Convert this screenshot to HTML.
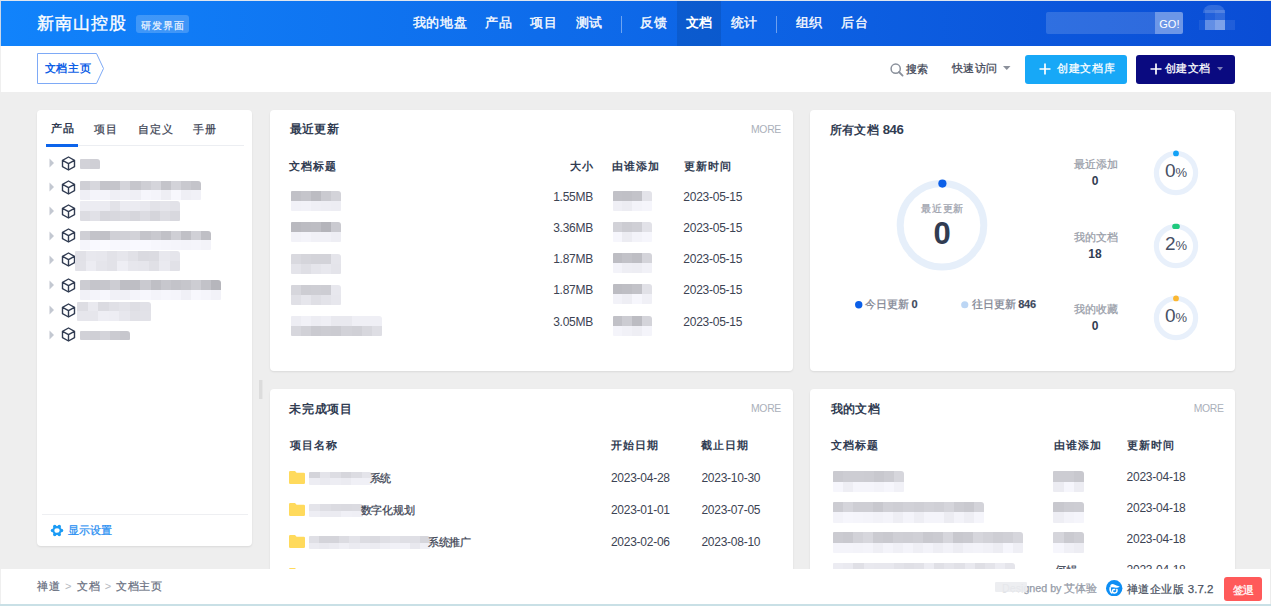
<!DOCTYPE html>
<html><head><meta charset="utf-8">
<style>
*{box-sizing:border-box}
html,body{margin:0;padding:0}
body{width:1271px;height:606px;overflow:hidden;position:relative;background:#eeeeee;font-family:"Liberation Sans",sans-serif;color:#3c4353;font-size:12px}
.a{position:absolute;white-space:nowrap}
#hdr,#sub,#ftr{position:absolute;left:0;width:1271px}
#hdr{top:0;height:46px;background:linear-gradient(90deg,#1183fb 0%,#0a4dd5 100%);border-top:1px solid #dfe6ef;border-left:1px solid #c9d7ea}
#sub{top:46px;height:45.5px;background:#fff;border-left:1px solid #efefef}
#hdr .a,#sub .a{}
.card{position:absolute;background:#fff;border-radius:4px;box-shadow:0 1px 2px rgba(0,0,0,.09)}
#ftr{top:569px;height:35px;background:#fff;border-left:1px solid #efefef;border-right:1px solid #ececec}
#strip{position:absolute;left:0;top:604px;width:1271px;height:2px;background:#c9e0e6}
</style></head><body>

<div id="hdr"></div>
<div class="a" style="left:37px;top:13.5px;font-size:17px;line-height:20px;color:#fff;letter-spacing:1.1px;-webkit-text-stroke:0.35px #fff;">新南山控股</div>
<div class="a" style="left:136px;top:15px;width:52.5px;height:18px;border-radius:3px;background:rgba(255,255,255,.2)"></div>
<div class="a" style="left:141px;top:18.5px;font-size:10px;line-height:13px;color:rgba(255,255,255,.85);letter-spacing:1px;-webkit-text-stroke:0.25px rgba(255,255,255,.85);">研发界面</div>
<div class="a" style="left:676.7px;top:1px;width:44px;height:44.5px;background:rgba(0,0,0,.1);"></div>
<div class="a" style="left:412.5px;top:14.8px;font-size:13px;line-height:16px;color:rgba(255,255,255,.93);font-weight:bold;letter-spacing:0.9px;">我的地盘</div>
<div class="a" style="left:485.1px;top:14.8px;font-size:13px;line-height:16px;color:rgba(255,255,255,.93);font-weight:bold;letter-spacing:0.9px;">产品</div>
<div class="a" style="left:530.1px;top:14.8px;font-size:13px;line-height:16px;color:rgba(255,255,255,.93);font-weight:bold;letter-spacing:0.9px;">项目</div>
<div class="a" style="left:575.5px;top:14.8px;font-size:13px;line-height:16px;color:rgba(255,255,255,.93);font-weight:bold;letter-spacing:0.9px;">测试</div>
<div class="a" style="left:640.3px;top:14.8px;font-size:13px;line-height:16px;color:rgba(255,255,255,.93);font-weight:bold;letter-spacing:0.9px;">反馈</div>
<div class="a" style="left:685.5px;top:14.8px;font-size:13px;line-height:16px;color:#fff;font-weight:bold;letter-spacing:0.9px;">文档</div>
<div class="a" style="left:730.5px;top:14.8px;font-size:13px;line-height:16px;color:rgba(255,255,255,.93);font-weight:bold;letter-spacing:0.9px;">统计</div>
<div class="a" style="left:795.5px;top:14.8px;font-size:13px;line-height:16px;color:rgba(255,255,255,.93);font-weight:bold;letter-spacing:0.9px;">组织</div>
<div class="a" style="left:840.7px;top:14.8px;font-size:13px;line-height:16px;color:rgba(255,255,255,.93);font-weight:bold;letter-spacing:0.9px;">后台</div>
<div class="a" style="left:621px;top:15.5px;width:1px;height:17px;background:rgba(255,255,255,.4);"></div>
<div class="a" style="left:776px;top:15.5px;width:1px;height:17px;background:rgba(255,255,255,.4);"></div>
<div class="a" style="left:1046px;top:12px;width:137px;height:22px;background:rgba(255,255,255,.15);border-radius:2px"></div>
<div class="a" style="left:1155px;top:12px;width:28px;height:22px;background:rgba(255,255,255,.3);border-radius:0 2px 2px 0"></div>
<div class="a" style="left:1159.3px;top:16.5px;font-size:11px;line-height:14px;color:#fff;">GO!</div>
<div class="a" style="left:1199px;top:5px;width:36px;height:25px"><div class="a" style="left:4px;top:0;width:22px;height:8px;border-radius:11px 11px 0 0;background:rgba(255,255,255,.16)"></div><div class="a" style="left:6px;top:5px;width:10px;height:10px;background:rgba(255,255,255,.1)"></div><div class="a" style="left:16px;top:5px;width:10px;height:10px;background:rgba(255,255,255,.16)"></div><div class="a" style="left:0;top:15px;width:6px;height:10px;background:rgba(255,255,255,.07)"></div><div class="a" style="left:6px;top:15px;width:10px;height:10px;background:rgba(255,255,255,.36)"></div><div class="a" style="left:16px;top:15px;width:10px;height:10px;background:rgba(255,255,255,.47)"></div><div class="a" style="left:26px;top:15px;width:10px;height:10px;background:rgba(255,255,255,.09)"></div></div>
<div id="sub"></div>
<svg class="a" style="left:37px;top:53px" width="70" height="31" viewBox="0 0 70 31"><path d="M0.5 0.5 H59.5 L66.5 15.5 L59.5 30.5 H0.5 Z" fill="#fff" stroke="#7eaaf6" stroke-width="1"/></svg>
<div class="a" style="left:44.5px;top:60.8px;font-size:11px;line-height:14px;color:#0f5fe6;font-weight:bold;letter-spacing:0.8px;">文档主页</div>
<svg class="a" style="left:890px;top:63px" width="14" height="14" viewBox="0 0 14 14"><circle cx="5.7" cy="5.7" r="4.6" fill="none" stroke="#8a909b" stroke-width="1.5"/><path d="M9 9 L12.6 12.6" stroke="#8a909b" stroke-width="1.8" stroke-linecap="round"/></svg>
<div class="a" style="left:905.5px;top:61.5px;font-size:11px;line-height:14px;color:#3c4353;letter-spacing:0.5px;-webkit-text-stroke:0.25px #3c4353;">搜索</div>
<div class="a" style="left:951.5px;top:61.3px;font-size:11px;line-height:14px;color:#3c4353;letter-spacing:0.5px;-webkit-text-stroke:0.25px #3c4353;">快速访问</div>
<svg class="a" style="left:1003px;top:66px" width="8" height="5" viewBox="0 0 8 5"><path d="M0 0 H7.5 L3.75 4 Z" fill="#8b909a"/></svg>
<div class="a" style="left:1025.3px;top:55px;width:101.5px;height:29px;background:#17a8f7;border-radius:3px"></div>
<svg class="a" style="left:1039px;top:63px" width="12" height="12" viewBox="0 0 12 12"><path d="M6 0.5 V11.5 M0.5 6 H11.5" stroke="#fff" stroke-width="1.7"/></svg>
<div class="a" style="left:1057px;top:61.3px;font-size:11px;line-height:14px;color:#fff;letter-spacing:0.7px;-webkit-text-stroke:0.25px #fff;">创建文档库</div>
<div class="a" style="left:1136px;top:55px;width:99px;height:29px;background:#0a0a80;border-radius:3px"></div>
<svg class="a" style="left:1150px;top:63px" width="12" height="12" viewBox="0 0 12 12"><path d="M6 0.5 V11.5 M0.5 6 H11.5" stroke="#fff" stroke-width="1.7"/></svg>
<div class="a" style="left:1164.5px;top:61.3px;font-size:11px;line-height:14px;color:#fff;letter-spacing:0.5px;-webkit-text-stroke:0.25px #fff;">创建文档</div>
<svg class="a" style="left:1216.5px;top:67px" width="6" height="4" viewBox="0 0 6 4"><path d="M0 0 H6 L3 3.5 Z" fill="#7f7fb5"/></svg>
<div class="card" style="left:37px;top:110px;width:215px;height:436px"></div>
<div class="a" style="left:50.5px;top:121px;font-size:11px;line-height:14px;color:#313c52;font-weight:bold;letter-spacing:1px;">产品</div>
<div class="a" style="left:93.7px;top:121.5px;font-size:11px;line-height:14px;color:#3c4353;letter-spacing:1px;-webkit-text-stroke:0.25px #3c4353;">项目</div>
<div class="a" style="left:138.2px;top:121.5px;font-size:11px;line-height:14px;color:#3c4353;letter-spacing:1px;-webkit-text-stroke:0.25px #3c4353;">自定义</div>
<div class="a" style="left:192.6px;top:121.5px;font-size:11px;line-height:14px;color:#3c4353;letter-spacing:1px;-webkit-text-stroke:0.25px #3c4353;">手册</div>
<div class="a" style="left:45.5px;top:145px;width:198px;height:1px;background:#eceef2;"></div>
<div class="a" style="left:45.5px;top:144px;width:32.5px;height:2.5px;background:#0c64eb;"></div>
<svg class="a" style="left:48.5px;top:158.2px" width="6" height="10" viewBox="0 0 6 10"><path d="M0.5 0.5 L5 5 L0.5 9.5 Z" fill="#c3c8d1"/></svg>
<svg class="a" style="left:61px;top:155.7px" width="15" height="15" viewBox="0 0 15 15"><path d="M7.5 1 L13.5 4.3 V10.7 L7.5 14 L1.5 10.7 V4.3 Z M1.5 4.3 L7.5 7.6 L13.5 4.3 M7.5 7.6 V14" fill="none" stroke="#313c52" stroke-width="1.4" stroke-linejoin="round"/></svg>
<svg class="a" style="left:48.5px;top:182.2px" width="6" height="10" viewBox="0 0 6 10"><path d="M0.5 0.5 L5 5 L0.5 9.5 Z" fill="#c3c8d1"/></svg>
<svg class="a" style="left:61px;top:179.7px" width="15" height="15" viewBox="0 0 15 15"><path d="M7.5 1 L13.5 4.3 V10.7 L7.5 14 L1.5 10.7 V4.3 Z M1.5 4.3 L7.5 7.6 L13.5 4.3 M7.5 7.6 V14" fill="none" stroke="#313c52" stroke-width="1.4" stroke-linejoin="round"/></svg>
<svg class="a" style="left:48.5px;top:206px" width="6" height="10" viewBox="0 0 6 10"><path d="M0.5 0.5 L5 5 L0.5 9.5 Z" fill="#c3c8d1"/></svg>
<svg class="a" style="left:61px;top:203.5px" width="15" height="15" viewBox="0 0 15 15"><path d="M7.5 1 L13.5 4.3 V10.7 L7.5 14 L1.5 10.7 V4.3 Z M1.5 4.3 L7.5 7.6 L13.5 4.3 M7.5 7.6 V14" fill="none" stroke="#313c52" stroke-width="1.4" stroke-linejoin="round"/></svg>
<svg class="a" style="left:48.5px;top:230.8px" width="6" height="10" viewBox="0 0 6 10"><path d="M0.5 0.5 L5 5 L0.5 9.5 Z" fill="#c3c8d1"/></svg>
<svg class="a" style="left:61px;top:228.3px" width="15" height="15" viewBox="0 0 15 15"><path d="M7.5 1 L13.5 4.3 V10.7 L7.5 14 L1.5 10.7 V4.3 Z M1.5 4.3 L7.5 7.6 L13.5 4.3 M7.5 7.6 V14" fill="none" stroke="#313c52" stroke-width="1.4" stroke-linejoin="round"/></svg>
<svg class="a" style="left:48.5px;top:254.9px" width="6" height="10" viewBox="0 0 6 10"><path d="M0.5 0.5 L5 5 L0.5 9.5 Z" fill="#c3c8d1"/></svg>
<svg class="a" style="left:61px;top:252.4px" width="15" height="15" viewBox="0 0 15 15"><path d="M7.5 1 L13.5 4.3 V10.7 L7.5 14 L1.5 10.7 V4.3 Z M1.5 4.3 L7.5 7.6 L13.5 4.3 M7.5 7.6 V14" fill="none" stroke="#313c52" stroke-width="1.4" stroke-linejoin="round"/></svg>
<svg class="a" style="left:48.5px;top:280.3px" width="6" height="10" viewBox="0 0 6 10"><path d="M0.5 0.5 L5 5 L0.5 9.5 Z" fill="#c3c8d1"/></svg>
<svg class="a" style="left:61px;top:277.8px" width="15" height="15" viewBox="0 0 15 15"><path d="M7.5 1 L13.5 4.3 V10.7 L7.5 14 L1.5 10.7 V4.3 Z M1.5 4.3 L7.5 7.6 L13.5 4.3 M7.5 7.6 V14" fill="none" stroke="#313c52" stroke-width="1.4" stroke-linejoin="round"/></svg>
<svg class="a" style="left:48.5px;top:305px" width="6" height="10" viewBox="0 0 6 10"><path d="M0.5 0.5 L5 5 L0.5 9.5 Z" fill="#c3c8d1"/></svg>
<svg class="a" style="left:61px;top:302.5px" width="15" height="15" viewBox="0 0 15 15"><path d="M7.5 1 L13.5 4.3 V10.7 L7.5 14 L1.5 10.7 V4.3 Z M1.5 4.3 L7.5 7.6 L13.5 4.3 M7.5 7.6 V14" fill="none" stroke="#313c52" stroke-width="1.4" stroke-linejoin="round"/></svg>
<svg class="a" style="left:48.5px;top:329.8px" width="6" height="10" viewBox="0 0 6 10"><path d="M0.5 0.5 L5 5 L0.5 9.5 Z" fill="#c3c8d1"/></svg>
<svg class="a" style="left:61px;top:327.3px" width="15" height="15" viewBox="0 0 15 15"><path d="M7.5 1 L13.5 4.3 V10.7 L7.5 14 L1.5 10.7 V4.3 Z M1.5 4.3 L7.5 7.6 L13.5 4.3 M7.5 7.6 V14" fill="none" stroke="#313c52" stroke-width="1.4" stroke-linejoin="round"/></svg>
<div class="a" style="left:80px;top:159px;width:20px;height:10px;overflow:hidden;border-radius:1px 3px 1px 1px"><div class="a" style="left:0.00px;top:0.00px;width:10.30px;height:10.30px;background:rgb(210,210,216)"></div><div class="a" style="left:10.00px;top:0.00px;width:10.30px;height:10.30px;background:rgb(207,207,213)"></div></div>
<div class="a" style="left:80px;top:180.6px;width:121px;height:19.4px;overflow:hidden;border-radius:1px 3px 1px 1px"><div class="a" style="left:0.00px;top:0.00px;width:10.38px;height:10.00px;background:rgb(207,207,213)"></div><div class="a" style="left:10.08px;top:0.00px;width:10.38px;height:10.00px;background:rgb(215,215,221)"></div><div class="a" style="left:20.17px;top:0.00px;width:10.38px;height:10.00px;background:rgb(196,196,202)"></div><div class="a" style="left:30.25px;top:0.00px;width:10.38px;height:10.00px;background:rgb(197,197,203)"></div><div class="a" style="left:40.33px;top:0.00px;width:10.38px;height:10.00px;background:rgb(212,212,218)"></div><div class="a" style="left:50.42px;top:0.00px;width:10.38px;height:10.00px;background:rgb(198,198,204)"></div><div class="a" style="left:60.50px;top:0.00px;width:10.38px;height:10.00px;background:rgb(206,206,212)"></div><div class="a" style="left:70.58px;top:0.00px;width:10.38px;height:10.00px;background:rgb(213,213,219)"></div><div class="a" style="left:80.67px;top:0.00px;width:10.38px;height:10.00px;background:rgb(196,196,202)"></div><div class="a" style="left:90.75px;top:0.00px;width:10.38px;height:10.00px;background:rgb(211,211,217)"></div><div class="a" style="left:100.83px;top:0.00px;width:10.38px;height:10.00px;background:rgb(201,201,207)"></div><div class="a" style="left:110.92px;top:0.00px;width:10.38px;height:10.00px;background:rgb(196,196,202)"></div><div class="a" style="left:0.00px;top:9.70px;width:10.38px;height:10.00px;background:rgb(239,239,245)"></div><div class="a" style="left:10.08px;top:9.70px;width:10.38px;height:10.00px;background:rgb(244,244,250)"></div><div class="a" style="left:20.17px;top:9.70px;width:10.38px;height:10.00px;background:rgb(244,244,250)"></div><div class="a" style="left:30.25px;top:9.70px;width:10.38px;height:10.00px;background:rgb(239,239,245)"></div><div class="a" style="left:40.33px;top:9.70px;width:10.38px;height:10.00px;background:rgb(241,241,247)"></div><div class="a" style="left:50.42px;top:9.70px;width:10.38px;height:10.00px;background:rgb(239,239,245)"></div><div class="a" style="left:60.50px;top:9.70px;width:10.38px;height:10.00px;background:rgb(246,246,252)"></div><div class="a" style="left:70.58px;top:9.70px;width:10.38px;height:10.00px;background:rgb(244,244,250)"></div><div class="a" style="left:80.67px;top:9.70px;width:10.38px;height:10.00px;background:rgb(238,238,244)"></div><div class="a" style="left:90.75px;top:9.70px;width:10.38px;height:10.00px;background:rgb(247,247,253)"></div><div class="a" style="left:100.83px;top:9.70px;width:10.38px;height:10.00px;background:rgb(239,239,245)"></div><div class="a" style="left:110.92px;top:9.70px;width:10.38px;height:10.00px;background:rgb(241,241,247)"></div></div>
<div class="a" style="left:80px;top:201px;width:100px;height:20px;overflow:hidden;border-radius:1px 3px 1px 1px"><div class="a" style="left:0.00px;top:0.00px;width:10.30px;height:10.30px;background:rgb(236,236,242)"></div><div class="a" style="left:10.00px;top:0.00px;width:10.30px;height:10.30px;background:rgb(236,236,242)"></div><div class="a" style="left:20.00px;top:0.00px;width:10.30px;height:10.30px;background:rgb(235,235,241)"></div><div class="a" style="left:30.00px;top:0.00px;width:10.30px;height:10.30px;background:rgb(226,226,232)"></div><div class="a" style="left:40.00px;top:0.00px;width:10.30px;height:10.30px;background:rgb(235,235,241)"></div><div class="a" style="left:50.00px;top:0.00px;width:10.30px;height:10.30px;background:rgb(235,235,241)"></div><div class="a" style="left:60.00px;top:0.00px;width:10.30px;height:10.30px;background:rgb(232,232,238)"></div><div class="a" style="left:70.00px;top:0.00px;width:10.30px;height:10.30px;background:rgb(226,226,232)"></div><div class="a" style="left:80.00px;top:0.00px;width:10.30px;height:10.30px;background:rgb(229,229,235)"></div><div class="a" style="left:90.00px;top:0.00px;width:10.30px;height:10.30px;background:rgb(226,226,232)"></div><div class="a" style="left:0.00px;top:10.00px;width:10.30px;height:10.30px;background:rgb(220,220,226)"></div><div class="a" style="left:10.00px;top:10.00px;width:10.30px;height:10.30px;background:rgb(225,225,231)"></div><div class="a" style="left:20.00px;top:10.00px;width:10.30px;height:10.30px;background:rgb(214,214,220)"></div><div class="a" style="left:30.00px;top:10.00px;width:10.30px;height:10.30px;background:rgb(216,216,222)"></div><div class="a" style="left:40.00px;top:10.00px;width:10.30px;height:10.30px;background:rgb(218,218,224)"></div><div class="a" style="left:50.00px;top:10.00px;width:10.30px;height:10.30px;background:rgb(214,214,220)"></div><div class="a" style="left:60.00px;top:10.00px;width:10.30px;height:10.30px;background:rgb(220,220,226)"></div><div class="a" style="left:70.00px;top:10.00px;width:10.30px;height:10.30px;background:rgb(213,213,219)"></div><div class="a" style="left:80.00px;top:10.00px;width:10.30px;height:10.30px;background:rgb(221,221,227)"></div><div class="a" style="left:90.00px;top:10.00px;width:10.30px;height:10.30px;background:rgb(216,216,222)"></div></div>
<div class="a" style="left:80px;top:230.8px;width:131px;height:19.2px;overflow:hidden;border-radius:1px 3px 1px 1px"><div class="a" style="left:0.00px;top:0.00px;width:10.38px;height:9.90px;background:rgb(207,207,213)"></div><div class="a" style="left:10.08px;top:0.00px;width:10.38px;height:9.90px;background:rgb(195,195,201)"></div><div class="a" style="left:20.15px;top:0.00px;width:10.38px;height:9.90px;background:rgb(193,193,199)"></div><div class="a" style="left:30.23px;top:0.00px;width:10.38px;height:9.90px;background:rgb(208,208,214)"></div><div class="a" style="left:40.31px;top:0.00px;width:10.38px;height:9.90px;background:rgb(208,208,214)"></div><div class="a" style="left:50.38px;top:0.00px;width:10.38px;height:9.90px;background:rgb(210,210,216)"></div><div class="a" style="left:60.46px;top:0.00px;width:10.38px;height:9.90px;background:rgb(196,196,202)"></div><div class="a" style="left:70.54px;top:0.00px;width:10.38px;height:9.90px;background:rgb(201,201,207)"></div><div class="a" style="left:80.62px;top:0.00px;width:10.38px;height:9.90px;background:rgb(193,193,199)"></div><div class="a" style="left:90.69px;top:0.00px;width:10.38px;height:9.90px;background:rgb(207,207,213)"></div><div class="a" style="left:100.77px;top:0.00px;width:10.38px;height:9.90px;background:rgb(192,192,198)"></div><div class="a" style="left:110.85px;top:0.00px;width:10.38px;height:9.90px;background:rgb(208,208,214)"></div><div class="a" style="left:120.92px;top:0.00px;width:10.38px;height:9.90px;background:rgb(191,191,197)"></div><div class="a" style="left:0.00px;top:9.60px;width:10.38px;height:9.90px;background:rgb(245,245,251)"></div><div class="a" style="left:10.08px;top:9.60px;width:10.38px;height:9.90px;background:rgb(249,249,255)"></div><div class="a" style="left:20.15px;top:9.60px;width:10.38px;height:9.90px;background:rgb(250,250,255)"></div><div class="a" style="left:30.23px;top:9.60px;width:10.38px;height:9.90px;background:rgb(248,248,254)"></div><div class="a" style="left:40.31px;top:9.60px;width:10.38px;height:9.90px;background:rgb(247,247,253)"></div><div class="a" style="left:50.38px;top:9.60px;width:10.38px;height:9.90px;background:rgb(249,249,255)"></div><div class="a" style="left:60.46px;top:9.60px;width:10.38px;height:9.90px;background:rgb(249,249,255)"></div><div class="a" style="left:70.54px;top:9.60px;width:10.38px;height:9.90px;background:rgb(247,247,253)"></div><div class="a" style="left:80.62px;top:9.60px;width:10.38px;height:9.90px;background:rgb(246,246,252)"></div><div class="a" style="left:90.69px;top:9.60px;width:10.38px;height:9.90px;background:rgb(245,245,251)"></div><div class="a" style="left:100.77px;top:9.60px;width:10.38px;height:9.90px;background:rgb(244,244,250)"></div><div class="a" style="left:110.85px;top:9.60px;width:10.38px;height:9.90px;background:rgb(245,245,251)"></div><div class="a" style="left:120.92px;top:9.60px;width:10.38px;height:9.90px;background:rgb(243,243,249)"></div></div>
<div class="a" style="left:75px;top:250.6px;width:105px;height:20.4px;overflow:hidden;border-radius:1px 3px 1px 1px"><div class="a" style="left:0.00px;top:0.00px;width:10.80px;height:10.50px;background:rgb(225,225,231)"></div><div class="a" style="left:10.50px;top:0.00px;width:10.80px;height:10.50px;background:rgb(232,232,238)"></div><div class="a" style="left:21.00px;top:0.00px;width:10.80px;height:10.50px;background:rgb(231,231,237)"></div><div class="a" style="left:31.50px;top:0.00px;width:10.80px;height:10.50px;background:rgb(226,226,232)"></div><div class="a" style="left:42.00px;top:0.00px;width:10.80px;height:10.50px;background:rgb(230,230,236)"></div><div class="a" style="left:52.50px;top:0.00px;width:10.80px;height:10.50px;background:rgb(225,225,231)"></div><div class="a" style="left:63.00px;top:0.00px;width:10.80px;height:10.50px;background:rgb(218,218,224)"></div><div class="a" style="left:73.50px;top:0.00px;width:10.80px;height:10.50px;background:rgb(219,219,225)"></div><div class="a" style="left:84.00px;top:0.00px;width:10.80px;height:10.50px;background:rgb(232,232,238)"></div><div class="a" style="left:94.50px;top:0.00px;width:10.80px;height:10.50px;background:rgb(229,229,235)"></div><div class="a" style="left:0.00px;top:10.20px;width:10.80px;height:10.50px;background:rgb(226,226,232)"></div><div class="a" style="left:10.50px;top:10.20px;width:10.80px;height:10.50px;background:rgb(236,236,242)"></div><div class="a" style="left:21.00px;top:10.20px;width:10.80px;height:10.50px;background:rgb(229,229,235)"></div><div class="a" style="left:31.50px;top:10.20px;width:10.80px;height:10.50px;background:rgb(226,226,232)"></div><div class="a" style="left:42.00px;top:10.20px;width:10.80px;height:10.50px;background:rgb(238,238,244)"></div><div class="a" style="left:52.50px;top:10.20px;width:10.80px;height:10.50px;background:rgb(231,231,237)"></div><div class="a" style="left:63.00px;top:10.20px;width:10.80px;height:10.50px;background:rgb(230,230,236)"></div><div class="a" style="left:73.50px;top:10.20px;width:10.80px;height:10.50px;background:rgb(224,224,230)"></div><div class="a" style="left:84.00px;top:10.20px;width:10.80px;height:10.50px;background:rgb(234,234,240)"></div><div class="a" style="left:94.50px;top:10.20px;width:10.80px;height:10.50px;background:rgb(225,225,231)"></div></div>
<div class="a" style="left:80px;top:280.3px;width:141px;height:19.7px;overflow:hidden;border-radius:1px 3px 1px 1px"><div class="a" style="left:0.00px;top:0.00px;width:10.37px;height:10.15px;background:rgb(204,204,210)"></div><div class="a" style="left:10.07px;top:0.00px;width:10.37px;height:10.15px;background:rgb(197,197,203)"></div><div class="a" style="left:20.14px;top:0.00px;width:10.37px;height:10.15px;background:rgb(198,198,204)"></div><div class="a" style="left:30.21px;top:0.00px;width:10.37px;height:10.15px;background:rgb(205,205,211)"></div><div class="a" style="left:40.29px;top:0.00px;width:10.37px;height:10.15px;background:rgb(190,190,196)"></div><div class="a" style="left:50.36px;top:0.00px;width:10.37px;height:10.15px;background:rgb(190,190,196)"></div><div class="a" style="left:60.43px;top:0.00px;width:10.37px;height:10.15px;background:rgb(202,202,208)"></div><div class="a" style="left:70.50px;top:0.00px;width:10.37px;height:10.15px;background:rgb(191,191,197)"></div><div class="a" style="left:80.57px;top:0.00px;width:10.37px;height:10.15px;background:rgb(199,199,205)"></div><div class="a" style="left:90.64px;top:0.00px;width:10.37px;height:10.15px;background:rgb(195,195,201)"></div><div class="a" style="left:100.71px;top:0.00px;width:10.37px;height:10.15px;background:rgb(198,198,204)"></div><div class="a" style="left:110.79px;top:0.00px;width:10.37px;height:10.15px;background:rgb(205,205,211)"></div><div class="a" style="left:120.86px;top:0.00px;width:10.37px;height:10.15px;background:rgb(194,194,200)"></div><div class="a" style="left:130.93px;top:0.00px;width:10.37px;height:10.15px;background:rgb(182,182,188)"></div><div class="a" style="left:0.00px;top:9.85px;width:10.37px;height:10.15px;background:rgb(241,241,247)"></div><div class="a" style="left:10.07px;top:9.85px;width:10.37px;height:10.15px;background:rgb(244,244,250)"></div><div class="a" style="left:20.14px;top:9.85px;width:10.37px;height:10.15px;background:rgb(247,247,253)"></div><div class="a" style="left:30.21px;top:9.85px;width:10.37px;height:10.15px;background:rgb(241,241,247)"></div><div class="a" style="left:40.29px;top:9.85px;width:10.37px;height:10.15px;background:rgb(240,240,246)"></div><div class="a" style="left:50.36px;top:9.85px;width:10.37px;height:10.15px;background:rgb(244,244,250)"></div><div class="a" style="left:60.43px;top:9.85px;width:10.37px;height:10.15px;background:rgb(247,247,253)"></div><div class="a" style="left:70.50px;top:9.85px;width:10.37px;height:10.15px;background:rgb(244,244,250)"></div><div class="a" style="left:80.57px;top:9.85px;width:10.37px;height:10.15px;background:rgb(246,246,252)"></div><div class="a" style="left:90.64px;top:9.85px;width:10.37px;height:10.15px;background:rgb(245,245,251)"></div><div class="a" style="left:100.71px;top:9.85px;width:10.37px;height:10.15px;background:rgb(240,240,246)"></div><div class="a" style="left:110.79px;top:9.85px;width:10.37px;height:10.15px;background:rgb(247,247,253)"></div><div class="a" style="left:120.86px;top:9.85px;width:10.37px;height:10.15px;background:rgb(245,245,251)"></div><div class="a" style="left:130.93px;top:9.85px;width:10.37px;height:10.15px;background:rgb(242,242,248)"></div></div>
<div class="a" style="left:77px;top:301.8px;width:73.5px;height:18.8px;overflow:hidden;border-radius:1px 3px 1px 1px"><div class="a" style="left:0.00px;top:0.00px;width:10.80px;height:9.70px;background:rgb(221,221,227)"></div><div class="a" style="left:10.50px;top:0.00px;width:10.80px;height:9.70px;background:rgb(233,233,239)"></div><div class="a" style="left:21.00px;top:0.00px;width:10.80px;height:9.70px;background:rgb(219,219,225)"></div><div class="a" style="left:31.50px;top:0.00px;width:10.80px;height:9.70px;background:rgb(224,224,230)"></div><div class="a" style="left:42.00px;top:0.00px;width:10.80px;height:9.70px;background:rgb(227,227,233)"></div><div class="a" style="left:52.50px;top:0.00px;width:10.80px;height:9.70px;background:rgb(222,222,228)"></div><div class="a" style="left:63.00px;top:0.00px;width:10.80px;height:9.70px;background:rgb(225,225,231)"></div><div class="a" style="left:0.00px;top:9.40px;width:10.80px;height:9.70px;background:rgb(230,230,236)"></div><div class="a" style="left:10.50px;top:9.40px;width:10.80px;height:9.70px;background:rgb(230,230,236)"></div><div class="a" style="left:21.00px;top:9.40px;width:10.80px;height:9.70px;background:rgb(238,238,244)"></div><div class="a" style="left:31.50px;top:9.40px;width:10.80px;height:9.70px;background:rgb(237,237,243)"></div><div class="a" style="left:42.00px;top:9.40px;width:10.80px;height:9.70px;background:rgb(231,231,237)"></div><div class="a" style="left:52.50px;top:9.40px;width:10.80px;height:9.70px;background:rgb(225,225,231)"></div><div class="a" style="left:63.00px;top:9.40px;width:10.80px;height:9.70px;background:rgb(226,226,232)"></div></div>
<div class="a" style="left:80px;top:330.5px;width:50px;height:9.9px;overflow:hidden;border-radius:1px 3px 1px 1px"><div class="a" style="left:0.00px;top:0.00px;width:10.30px;height:10.20px;background:rgb(209,209,215)"></div><div class="a" style="left:10.00px;top:0.00px;width:10.30px;height:10.20px;background:rgb(207,207,213)"></div><div class="a" style="left:20.00px;top:0.00px;width:10.30px;height:10.20px;background:rgb(212,212,218)"></div><div class="a" style="left:30.00px;top:0.00px;width:10.30px;height:10.20px;background:rgb(203,203,209)"></div><div class="a" style="left:40.00px;top:0.00px;width:10.30px;height:10.20px;background:rgb(199,199,205)"></div></div>
<div class="a" style="left:41.7px;top:514px;width:206px;height:1px;background:#eeeff2;"></div>
<svg class="a" style="left:49.8px;top:523.9px" width="14" height="13" viewBox="0 0 14 13"><g fill="#1b9bf5"><circle cx="7" cy="6.5" r="4.6"/><circle cx="11.50" cy="6.50" r="1.75"/><circle cx="9.25" cy="10.40" r="1.75"/><circle cx="4.75" cy="10.40" r="1.75"/><circle cx="2.50" cy="6.50" r="1.75"/><circle cx="4.75" cy="2.60" r="1.75"/><circle cx="9.25" cy="2.60" r="1.75"/></g><ellipse cx="7" cy="6.5" rx="2.6" ry="2.3" fill="#fff"/></svg>
<div class="a" style="left:68.3px;top:524px;font-size:11px;line-height:13px;color:#2a8ff2;-webkit-text-stroke:0.25px #2a8ff2;">显示设置</div>
<div class="a" style="left:258.7px;top:380.2px;width:4px;height:18.5px;background:#dcdcdc;border-right:1px solid #e6e6e6"></div>
<div class="card" style="left:270px;top:110px;width:522.5px;height:260.6px"></div>
<div class="a" style="left:289.5px;top:121.5px;font-size:12px;line-height:15px;color:#313c52;font-weight:bold;letter-spacing:0.4px;">最近更新</div>
<div class="a" style="left:751px;top:123.8px;font-size:10.4px;line-height:11px;color:#aab0ba;letter-spacing:-0.3px;">MORE</div>
<div class="a" style="left:289.3px;top:159.1px;font-size:11px;line-height:14px;color:#313c52;font-weight:bold;letter-spacing:1.0px;">文档标题</div>
<div class="a" style="right:678px;top:159.1px;font-size:11px;line-height:14px;color:#313c52;font-weight:bold;letter-spacing:1.0px;margin-right:-1.0px;text-align:right">大小</div>
<div class="a" style="left:611.8px;top:159.1px;font-size:11px;line-height:14px;color:#313c52;font-weight:bold;letter-spacing:1.0px;">由谁添加</div>
<div class="a" style="left:683.7px;top:159.1px;font-size:11px;line-height:14px;color:#313c52;font-weight:bold;letter-spacing:1.0px;">更新时间</div>
<div class="a" style="right:678px;top:189.7px;font-size:12px;line-height:14px;color:#3c4353;letter-spacing:-0.25px;margin-right:--0.25px;text-align:right">1.55MB</div>
<div class="a" style="left:683.3px;top:189.7px;font-size:12px;line-height:14px;color:#3c4353;letter-spacing:-0.25px;">2023-05-15</div>
<div class="a" style="left:291.2px;top:191px;width:49.8px;height:20px;overflow:hidden;border-radius:1px 3px 1px 1px"><div class="a" style="left:0.00px;top:0.00px;width:10.26px;height:10.30px;background:rgb(193,193,199)"></div><div class="a" style="left:9.96px;top:0.00px;width:10.26px;height:10.30px;background:rgb(197,197,203)"></div><div class="a" style="left:19.92px;top:0.00px;width:10.26px;height:10.30px;background:rgb(188,188,194)"></div><div class="a" style="left:29.88px;top:0.00px;width:10.26px;height:10.30px;background:rgb(202,202,208)"></div><div class="a" style="left:39.84px;top:0.00px;width:10.26px;height:10.30px;background:rgb(211,211,217)"></div><div class="a" style="left:0.00px;top:10.00px;width:10.26px;height:10.30px;background:rgb(241,241,247)"></div><div class="a" style="left:9.96px;top:10.00px;width:10.26px;height:10.30px;background:rgb(242,242,248)"></div><div class="a" style="left:19.92px;top:10.00px;width:10.26px;height:10.30px;background:rgb(239,239,245)"></div><div class="a" style="left:29.88px;top:10.00px;width:10.26px;height:10.30px;background:rgb(238,238,244)"></div><div class="a" style="left:39.84px;top:10.00px;width:10.26px;height:10.30px;background:rgb(237,237,243)"></div></div>
<div class="a" style="left:612.5px;top:190.5px;width:39.5px;height:20px;overflow:hidden;border-radius:1px 3px 1px 1px"><div class="a" style="left:0.00px;top:0.00px;width:10.18px;height:10.30px;background:rgb(193,193,199)"></div><div class="a" style="left:9.88px;top:0.00px;width:10.18px;height:10.30px;background:rgb(192,192,198)"></div><div class="a" style="left:19.75px;top:0.00px;width:10.18px;height:10.30px;background:rgb(195,195,201)"></div><div class="a" style="left:29.62px;top:0.00px;width:10.18px;height:10.30px;background:rgb(227,227,233)"></div><div class="a" style="left:0.00px;top:10.00px;width:10.18px;height:10.30px;background:rgb(239,239,245)"></div><div class="a" style="left:9.88px;top:10.00px;width:10.18px;height:10.30px;background:rgb(236,236,242)"></div><div class="a" style="left:19.75px;top:10.00px;width:10.18px;height:10.30px;background:rgb(243,243,249)"></div><div class="a" style="left:29.62px;top:10.00px;width:10.18px;height:10.30px;background:rgb(245,245,251)"></div></div>
<div class="a" style="right:678px;top:220.7px;font-size:12px;line-height:14px;color:#3c4353;letter-spacing:-0.25px;margin-right:--0.25px;text-align:right">3.36MB</div>
<div class="a" style="left:683.3px;top:220.7px;font-size:12px;line-height:14px;color:#3c4353;letter-spacing:-0.25px;">2023-05-15</div>
<div class="a" style="left:291.2px;top:222px;width:49.8px;height:20px;overflow:hidden;border-radius:1px 3px 1px 1px"><div class="a" style="left:0.00px;top:0.00px;width:10.26px;height:10.30px;background:rgb(185,185,191)"></div><div class="a" style="left:9.96px;top:0.00px;width:10.26px;height:10.30px;background:rgb(188,188,194)"></div><div class="a" style="left:19.92px;top:0.00px;width:10.26px;height:10.30px;background:rgb(189,189,195)"></div><div class="a" style="left:29.88px;top:0.00px;width:10.26px;height:10.30px;background:rgb(180,180,186)"></div><div class="a" style="left:39.84px;top:0.00px;width:10.26px;height:10.30px;background:rgb(202,202,208)"></div><div class="a" style="left:0.00px;top:10.00px;width:10.26px;height:10.30px;background:rgb(242,242,248)"></div><div class="a" style="left:9.96px;top:10.00px;width:10.26px;height:10.30px;background:rgb(244,244,250)"></div><div class="a" style="left:19.92px;top:10.00px;width:10.26px;height:10.30px;background:rgb(241,241,247)"></div><div class="a" style="left:29.88px;top:10.00px;width:10.26px;height:10.30px;background:rgb(241,241,247)"></div><div class="a" style="left:39.84px;top:10.00px;width:10.26px;height:10.30px;background:rgb(238,238,244)"></div></div>
<div class="a" style="left:612.5px;top:221.5px;width:39.5px;height:20px;overflow:hidden;border-radius:1px 3px 1px 1px"><div class="a" style="left:0.00px;top:0.00px;width:10.18px;height:10.30px;background:rgb(210,210,216)"></div><div class="a" style="left:9.88px;top:0.00px;width:10.18px;height:10.30px;background:rgb(204,204,210)"></div><div class="a" style="left:19.75px;top:0.00px;width:10.18px;height:10.30px;background:rgb(207,207,213)"></div><div class="a" style="left:29.62px;top:0.00px;width:10.18px;height:10.30px;background:rgb(226,226,232)"></div><div class="a" style="left:0.00px;top:10.00px;width:10.18px;height:10.30px;background:rgb(246,246,252)"></div><div class="a" style="left:9.88px;top:10.00px;width:10.18px;height:10.30px;background:rgb(236,236,242)"></div><div class="a" style="left:19.75px;top:10.00px;width:10.18px;height:10.30px;background:rgb(243,243,249)"></div><div class="a" style="left:29.62px;top:10.00px;width:10.18px;height:10.30px;background:rgb(246,246,252)"></div></div>
<div class="a" style="right:678px;top:252.2px;font-size:12px;line-height:14px;color:#3c4353;letter-spacing:-0.25px;margin-right:--0.25px;text-align:right">1.87MB</div>
<div class="a" style="left:683.3px;top:252.2px;font-size:12px;line-height:14px;color:#3c4353;letter-spacing:-0.25px;">2023-05-15</div>
<div class="a" style="left:291.2px;top:253.5px;width:49.8px;height:20px;overflow:hidden;border-radius:1px 3px 1px 1px"><div class="a" style="left:0.00px;top:0.00px;width:10.26px;height:10.30px;background:rgb(217,217,223)"></div><div class="a" style="left:9.96px;top:0.00px;width:10.26px;height:10.30px;background:rgb(213,213,219)"></div><div class="a" style="left:19.92px;top:0.00px;width:10.26px;height:10.30px;background:rgb(211,211,217)"></div><div class="a" style="left:29.88px;top:0.00px;width:10.26px;height:10.30px;background:rgb(211,211,217)"></div><div class="a" style="left:39.84px;top:0.00px;width:10.26px;height:10.30px;background:rgb(229,229,235)"></div><div class="a" style="left:0.00px;top:10.00px;width:10.26px;height:10.30px;background:rgb(228,228,234)"></div><div class="a" style="left:9.96px;top:10.00px;width:10.26px;height:10.30px;background:rgb(223,223,229)"></div><div class="a" style="left:19.92px;top:10.00px;width:10.26px;height:10.30px;background:rgb(229,229,235)"></div><div class="a" style="left:29.88px;top:10.00px;width:10.26px;height:10.30px;background:rgb(232,232,238)"></div><div class="a" style="left:39.84px;top:10.00px;width:10.26px;height:10.30px;background:rgb(228,228,234)"></div></div>
<div class="a" style="left:612.5px;top:253.0px;width:39.5px;height:20px;overflow:hidden;border-radius:1px 3px 1px 1px"><div class="a" style="left:0.00px;top:0.00px;width:10.18px;height:10.30px;background:rgb(189,189,195)"></div><div class="a" style="left:9.88px;top:0.00px;width:10.18px;height:10.30px;background:rgb(194,194,200)"></div><div class="a" style="left:19.75px;top:0.00px;width:10.18px;height:10.30px;background:rgb(190,190,196)"></div><div class="a" style="left:29.62px;top:0.00px;width:10.18px;height:10.30px;background:rgb(212,212,218)"></div><div class="a" style="left:0.00px;top:10.00px;width:10.18px;height:10.30px;background:rgb(243,243,249)"></div><div class="a" style="left:9.88px;top:10.00px;width:10.18px;height:10.30px;background:rgb(238,238,244)"></div><div class="a" style="left:19.75px;top:10.00px;width:10.18px;height:10.30px;background:rgb(237,237,243)"></div><div class="a" style="left:29.62px;top:10.00px;width:10.18px;height:10.30px;background:rgb(241,241,247)"></div></div>
<div class="a" style="right:678px;top:283.2px;font-size:12px;line-height:14px;color:#3c4353;letter-spacing:-0.25px;margin-right:--0.25px;text-align:right">1.87MB</div>
<div class="a" style="left:683.3px;top:283.2px;font-size:12px;line-height:14px;color:#3c4353;letter-spacing:-0.25px;">2023-05-15</div>
<div class="a" style="left:291.2px;top:284.5px;width:49.8px;height:20px;overflow:hidden;border-radius:1px 3px 1px 1px"><div class="a" style="left:0.00px;top:0.00px;width:10.26px;height:10.30px;background:rgb(214,214,220)"></div><div class="a" style="left:9.96px;top:0.00px;width:10.26px;height:10.30px;background:rgb(205,205,211)"></div><div class="a" style="left:19.92px;top:0.00px;width:10.26px;height:10.30px;background:rgb(206,206,212)"></div><div class="a" style="left:29.88px;top:0.00px;width:10.26px;height:10.30px;background:rgb(205,205,211)"></div><div class="a" style="left:39.84px;top:0.00px;width:10.26px;height:10.30px;background:rgb(232,232,238)"></div><div class="a" style="left:0.00px;top:10.00px;width:10.26px;height:10.30px;background:rgb(224,224,230)"></div><div class="a" style="left:9.96px;top:10.00px;width:10.26px;height:10.30px;background:rgb(230,230,236)"></div><div class="a" style="left:19.92px;top:10.00px;width:10.26px;height:10.30px;background:rgb(223,223,229)"></div><div class="a" style="left:29.88px;top:10.00px;width:10.26px;height:10.30px;background:rgb(227,227,233)"></div><div class="a" style="left:39.84px;top:10.00px;width:10.26px;height:10.30px;background:rgb(231,231,237)"></div></div>
<div class="a" style="left:612.5px;top:284.0px;width:39.5px;height:20px;overflow:hidden;border-radius:1px 3px 1px 1px"><div class="a" style="left:0.00px;top:0.00px;width:10.18px;height:10.30px;background:rgb(188,188,194)"></div><div class="a" style="left:9.88px;top:0.00px;width:10.18px;height:10.30px;background:rgb(190,190,196)"></div><div class="a" style="left:19.75px;top:0.00px;width:10.18px;height:10.30px;background:rgb(194,194,200)"></div><div class="a" style="left:29.62px;top:0.00px;width:10.18px;height:10.30px;background:rgb(225,225,231)"></div><div class="a" style="left:0.00px;top:10.00px;width:10.18px;height:10.30px;background:rgb(242,242,248)"></div><div class="a" style="left:9.88px;top:10.00px;width:10.18px;height:10.30px;background:rgb(238,238,244)"></div><div class="a" style="left:19.75px;top:10.00px;width:10.18px;height:10.30px;background:rgb(246,246,252)"></div><div class="a" style="left:29.62px;top:10.00px;width:10.18px;height:10.30px;background:rgb(240,240,246)"></div></div>
<div class="a" style="right:678px;top:314.7px;font-size:12px;line-height:14px;color:#3c4353;letter-spacing:-0.25px;margin-right:--0.25px;text-align:right">3.05MB</div>
<div class="a" style="left:683.3px;top:314.7px;font-size:12px;line-height:14px;color:#3c4353;letter-spacing:-0.25px;">2023-05-15</div>
<div class="a" style="left:291.2px;top:316px;width:90.5px;height:20px;overflow:hidden;border-radius:1px 3px 1px 1px"><div class="a" style="left:0.00px;top:0.00px;width:10.36px;height:10.30px;background:rgb(237,237,243)"></div><div class="a" style="left:10.06px;top:0.00px;width:10.36px;height:10.30px;background:rgb(241,241,247)"></div><div class="a" style="left:20.11px;top:0.00px;width:10.36px;height:10.30px;background:rgb(237,237,243)"></div><div class="a" style="left:30.17px;top:0.00px;width:10.36px;height:10.30px;background:rgb(239,239,245)"></div><div class="a" style="left:40.22px;top:0.00px;width:10.36px;height:10.30px;background:rgb(233,233,239)"></div><div class="a" style="left:50.28px;top:0.00px;width:10.36px;height:10.30px;background:rgb(233,233,239)"></div><div class="a" style="left:60.33px;top:0.00px;width:10.36px;height:10.30px;background:rgb(239,239,245)"></div><div class="a" style="left:70.39px;top:0.00px;width:10.36px;height:10.30px;background:rgb(239,239,245)"></div><div class="a" style="left:80.44px;top:0.00px;width:10.36px;height:10.30px;background:rgb(239,239,245)"></div><div class="a" style="left:0.00px;top:10.00px;width:10.36px;height:10.30px;background:rgb(215,215,221)"></div><div class="a" style="left:10.06px;top:10.00px;width:10.36px;height:10.30px;background:rgb(209,209,215)"></div><div class="a" style="left:20.11px;top:10.00px;width:10.36px;height:10.30px;background:rgb(202,202,208)"></div><div class="a" style="left:30.17px;top:10.00px;width:10.36px;height:10.30px;background:rgb(204,204,210)"></div><div class="a" style="left:40.22px;top:10.00px;width:10.36px;height:10.30px;background:rgb(203,203,209)"></div><div class="a" style="left:50.28px;top:10.00px;width:10.36px;height:10.30px;background:rgb(210,210,216)"></div><div class="a" style="left:60.33px;top:10.00px;width:10.36px;height:10.30px;background:rgb(208,208,214)"></div><div class="a" style="left:70.39px;top:10.00px;width:10.36px;height:10.30px;background:rgb(215,215,221)"></div><div class="a" style="left:80.44px;top:10.00px;width:10.36px;height:10.30px;background:rgb(222,222,228)"></div></div>
<div class="a" style="left:612.5px;top:315.5px;width:39.5px;height:20px;overflow:hidden;border-radius:1px 3px 1px 1px"><div class="a" style="left:0.00px;top:0.00px;width:10.18px;height:10.30px;background:rgb(193,193,199)"></div><div class="a" style="left:9.88px;top:0.00px;width:10.18px;height:10.30px;background:rgb(204,204,210)"></div><div class="a" style="left:19.75px;top:0.00px;width:10.18px;height:10.30px;background:rgb(188,188,194)"></div><div class="a" style="left:29.62px;top:0.00px;width:10.18px;height:10.30px;background:rgb(212,212,218)"></div><div class="a" style="left:0.00px;top:10.00px;width:10.18px;height:10.30px;background:rgb(244,244,250)"></div><div class="a" style="left:9.88px;top:10.00px;width:10.18px;height:10.30px;background:rgb(241,241,247)"></div><div class="a" style="left:19.75px;top:10.00px;width:10.18px;height:10.30px;background:rgb(238,238,244)"></div><div class="a" style="left:29.62px;top:10.00px;width:10.18px;height:10.30px;background:rgb(244,244,250)"></div></div>
<div class="card" style="left:810px;top:110px;width:424.5px;height:260.6px"></div>
<div class="a" style="left:829.8px;top:121.5px;font-size:12px;line-height:15px;color:#313c52;font-weight:bold;letter-spacing:0.3px;">所有文档 <span style="font-size:13.2px;letter-spacing:-0.35px;position:relative;top:0.8px">846</span></div>
<svg class="a" style="left:892px;top:174.6px" width="100" height="100" viewBox="0 0 100 100"><circle cx="50" cy="50.2" r="41.8" fill="none" stroke="#e6effa" stroke-width="7"/><circle cx="50.4" cy="8.6" r="4.1" fill="#0b5fe8"/></svg>
<div class="a" style="left:921px;top:202px;font-size:10px;line-height:13px;color:#9ea3ae;letter-spacing:0.8px;-webkit-text-stroke:0.25px #9ea3ae;">最近更新</div>
<div class="a" style="left:892px;top:215.5px;width:100px;text-align:center;font-size:31px;line-height:36px;font-weight:bold;color:#313c52">0</div>
<svg class="a" style="left:854.5px;top:301px" width="8" height="8"><circle cx="3.75" cy="3.75" r="3.7" fill="#0b5fe8"/></svg>
<div class="a" style="left:865.4px;top:297.8px;font-size:11px;line-height:13px;color:#7f8593;-webkit-text-stroke:0.25px #7f8593;">今日更新 <b style="color:#313c52;margin-left:-1px">0</b></div>
<svg class="a" style="left:961.3px;top:301px" width="8" height="8"><circle cx="3.75" cy="3.75" r="3.6" fill="#bcd6f4"/></svg>
<div class="a" style="left:971.6px;top:297.8px;font-size:11px;line-height:13px;color:#7f8593;-webkit-text-stroke:0.25px #7f8593;">往日更新 <b style="color:#313c52;margin-left:-0.5px;letter-spacing:-0.2px">846</b></div>
<svg class="a" style="left:1148.5px;top:146.2px" width="54" height="54" viewBox="0 0 54 54"><circle cx="27" cy="27" r="19.6" fill="none" stroke="#e8f0fb" stroke-width="5.2"/><circle cx="27" cy="7.399999999999999" r="2.9" fill="#12a1f6"/></svg>
<div class="a" style="left:1148.5px;top:160.2px;width:54px;text-align:center;padding-left:1px;font-size:19px;line-height:22px;color:#485064">0<span style="font-size:13px">%</span></div>
<div class="a" style="left:1074.2px;top:158.2px;font-size:11px;line-height:13px;color:#989da8;-webkit-text-stroke:0.25px #989da8;">最近添加</div>
<div class="a" style="left:1065px;top:174.4px;width:60px;text-align:center;font-size:12px;line-height:14px;font-weight:bold;color:#313c52">0</div>
<svg class="a" style="left:1148.5px;top:218.5px" width="54" height="54" viewBox="0 0 54 54"><circle cx="27" cy="27" r="19.6" fill="none" stroke="#e8f0fb" stroke-width="5.2"/><path d="M25.9 7.399999999999999 L28.1 7.399999999999999" stroke="#1ec97d" stroke-width="5.4" stroke-linecap="round"/></svg>
<div class="a" style="left:1148.5px;top:232.5px;width:54px;text-align:center;padding-left:1px;font-size:19px;line-height:22px;color:#485064">2<span style="font-size:13px">%</span></div>
<div class="a" style="left:1074.2px;top:230.5px;font-size:11px;line-height:13px;color:#989da8;-webkit-text-stroke:0.25px #989da8;">我的文档</div>
<div class="a" style="left:1065px;top:246.7px;width:60px;text-align:center;font-size:12px;line-height:14px;font-weight:bold;color:#313c52">18</div>
<svg class="a" style="left:1148.5px;top:291.0px" width="54" height="54" viewBox="0 0 54 54"><circle cx="27" cy="27" r="19.6" fill="none" stroke="#e8f0fb" stroke-width="5.2"/><circle cx="27" cy="7.399999999999999" r="2.9" fill="#fbb731"/></svg>
<div class="a" style="left:1148.5px;top:305.0px;width:54px;text-align:center;padding-left:1px;font-size:19px;line-height:22px;color:#485064">0<span style="font-size:13px">%</span></div>
<div class="a" style="left:1074.2px;top:303px;font-size:11px;line-height:13px;color:#989da8;-webkit-text-stroke:0.25px #989da8;">我的收藏</div>
<div class="a" style="left:1065px;top:319.2px;width:60px;text-align:center;font-size:12px;line-height:14px;font-weight:bold;color:#313c52">0</div>
<div class="card" style="left:270px;top:389px;width:522.5px;height:220px"></div>
<div class="a" style="left:289.3px;top:401.8px;font-size:12px;line-height:15px;color:#313c52;font-weight:bold;letter-spacing:0.7px;">未完成项目</div>
<div class="a" style="left:751px;top:403.3px;font-size:10.4px;line-height:11px;color:#aab0ba;letter-spacing:-0.3px;">MORE</div>
<div class="a" style="left:289.6px;top:438.1px;font-size:11px;line-height:14px;color:#313c52;font-weight:bold;letter-spacing:1.0px;">项目名称</div>
<div class="a" style="left:610.9px;top:438.1px;font-size:11px;line-height:14px;color:#313c52;font-weight:bold;letter-spacing:1.0px;">开始日期</div>
<div class="a" style="left:701.4px;top:438.1px;font-size:11px;line-height:14px;color:#313c52;font-weight:bold;letter-spacing:1.0px;">截止日期</div>
<svg class="a" style="left:288.5px;top:471.0px" width="16" height="13" viewBox="0 0 16 13"><path d="M0 1.2 Q0 0 1.2 0 H6 L7.6 1.8 H14.8 Q16 1.8 16 3 V11.8 Q16 13 14.8 13 H1.2 Q0 13 0 11.8 Z" fill="#ffda5c"/></svg>
<div class="a" style="left:309px;top:471.8px;width:63px;height:13px;overflow:hidden;border-radius:1px 3px 1px 1px"><div class="a" style="left:0.00px;top:0.00px;width:10.80px;height:6.80px;background:rgb(212,212,218)"></div><div class="a" style="left:10.50px;top:0.00px;width:10.80px;height:6.80px;background:rgb(228,228,234)"></div><div class="a" style="left:21.00px;top:0.00px;width:10.80px;height:6.80px;background:rgb(221,221,227)"></div><div class="a" style="left:31.50px;top:0.00px;width:10.80px;height:6.80px;background:rgb(214,214,220)"></div><div class="a" style="left:42.00px;top:0.00px;width:10.80px;height:6.80px;background:rgb(220,220,226)"></div><div class="a" style="left:52.50px;top:0.00px;width:10.80px;height:6.80px;background:rgb(228,228,234)"></div><div class="a" style="left:0.00px;top:6.50px;width:10.80px;height:6.80px;background:rgb(237,237,243)"></div><div class="a" style="left:10.50px;top:6.50px;width:10.80px;height:6.80px;background:rgb(234,234,240)"></div><div class="a" style="left:21.00px;top:6.50px;width:10.80px;height:6.80px;background:rgb(237,237,243)"></div><div class="a" style="left:31.50px;top:6.50px;width:10.80px;height:6.80px;background:rgb(235,235,241)"></div><div class="a" style="left:42.00px;top:6.50px;width:10.80px;height:6.80px;background:rgb(240,240,246)"></div><div class="a" style="left:52.50px;top:6.50px;width:10.80px;height:6.80px;background:rgb(240,240,246)"></div></div>
<div class="a" style="left:369.5px;top:471.2px;font-size:11px;line-height:14px;color:#3c4353;letter-spacing:-0.2px;-webkit-text-stroke:0.25px #3c4353;">系统</div>
<div class="a" style="left:610.9px;top:470.5px;font-size:12px;line-height:14px;color:#3c4353;letter-spacing:-0.25px;">2023-04-28</div>
<div class="a" style="left:701.4px;top:470.5px;font-size:12px;line-height:14px;color:#3c4353;letter-spacing:-0.25px;">2023-10-30</div>
<svg class="a" style="left:288.5px;top:503.2px" width="16" height="13" viewBox="0 0 16 13"><path d="M0 1.2 Q0 0 1.2 0 H6 L7.6 1.8 H14.8 Q16 1.8 16 3 V11.8 Q16 13 14.8 13 H1.2 Q0 13 0 11.8 Z" fill="#ffda5c"/></svg>
<div class="a" style="left:309px;top:504px;width:54px;height:13px;overflow:hidden;border-radius:1px 3px 1px 1px"><div class="a" style="left:0.00px;top:0.00px;width:11.10px;height:6.80px;background:rgb(228,228,234)"></div><div class="a" style="left:10.80px;top:0.00px;width:11.10px;height:6.80px;background:rgb(222,222,228)"></div><div class="a" style="left:21.60px;top:0.00px;width:11.10px;height:6.80px;background:rgb(219,219,225)"></div><div class="a" style="left:32.40px;top:0.00px;width:11.10px;height:6.80px;background:rgb(218,218,224)"></div><div class="a" style="left:43.20px;top:0.00px;width:11.10px;height:6.80px;background:rgb(219,219,225)"></div><div class="a" style="left:0.00px;top:6.50px;width:11.10px;height:6.80px;background:rgb(238,238,244)"></div><div class="a" style="left:10.80px;top:6.50px;width:11.10px;height:6.80px;background:rgb(235,235,241)"></div><div class="a" style="left:21.60px;top:6.50px;width:11.10px;height:6.80px;background:rgb(235,235,241)"></div><div class="a" style="left:32.40px;top:6.50px;width:11.10px;height:6.80px;background:rgb(240,240,246)"></div><div class="a" style="left:43.20px;top:6.50px;width:11.10px;height:6.80px;background:rgb(239,239,245)"></div></div>
<div class="a" style="left:360.5px;top:503.4px;font-size:11px;line-height:14px;color:#3c4353;letter-spacing:-0.2px;-webkit-text-stroke:0.25px #3c4353;">数字化规划</div>
<div class="a" style="left:610.9px;top:502.7px;font-size:12px;line-height:14px;color:#3c4353;letter-spacing:-0.25px;">2023-01-01</div>
<div class="a" style="left:701.4px;top:502.7px;font-size:12px;line-height:14px;color:#3c4353;letter-spacing:-0.25px;">2023-07-05</div>
<svg class="a" style="left:288.5px;top:535.2px" width="16" height="13" viewBox="0 0 16 13"><path d="M0 1.2 Q0 0 1.2 0 H6 L7.6 1.8 H14.8 Q16 1.8 16 3 V11.8 Q16 13 14.8 13 H1.2 Q0 13 0 11.8 Z" fill="#ffda5c"/></svg>
<div class="a" style="left:309px;top:536px;width:121.4px;height:13px;overflow:hidden;border-radius:1px 3px 1px 1px"><div class="a" style="left:0.00px;top:0.00px;width:10.42px;height:6.80px;background:rgb(223,223,229)"></div><div class="a" style="left:10.12px;top:0.00px;width:10.42px;height:6.80px;background:rgb(212,212,218)"></div><div class="a" style="left:20.23px;top:0.00px;width:10.42px;height:6.80px;background:rgb(212,212,218)"></div><div class="a" style="left:30.35px;top:0.00px;width:10.42px;height:6.80px;background:rgb(220,220,226)"></div><div class="a" style="left:40.47px;top:0.00px;width:10.42px;height:6.80px;background:rgb(227,227,233)"></div><div class="a" style="left:50.58px;top:0.00px;width:10.42px;height:6.80px;background:rgb(220,220,226)"></div><div class="a" style="left:60.70px;top:0.00px;width:10.42px;height:6.80px;background:rgb(218,218,224)"></div><div class="a" style="left:70.82px;top:0.00px;width:10.42px;height:6.80px;background:rgb(223,223,229)"></div><div class="a" style="left:80.93px;top:0.00px;width:10.42px;height:6.80px;background:rgb(226,226,232)"></div><div class="a" style="left:91.05px;top:0.00px;width:10.42px;height:6.80px;background:rgb(223,223,229)"></div><div class="a" style="left:101.17px;top:0.00px;width:10.42px;height:6.80px;background:rgb(223,223,229)"></div><div class="a" style="left:111.28px;top:0.00px;width:10.42px;height:6.80px;background:rgb(214,214,220)"></div><div class="a" style="left:0.00px;top:6.50px;width:10.42px;height:6.80px;background:rgb(235,235,241)"></div><div class="a" style="left:10.12px;top:6.50px;width:10.42px;height:6.80px;background:rgb(233,233,239)"></div><div class="a" style="left:20.23px;top:6.50px;width:10.42px;height:6.80px;background:rgb(235,235,241)"></div><div class="a" style="left:30.35px;top:6.50px;width:10.42px;height:6.80px;background:rgb(239,239,245)"></div><div class="a" style="left:40.47px;top:6.50px;width:10.42px;height:6.80px;background:rgb(235,235,241)"></div><div class="a" style="left:50.58px;top:6.50px;width:10.42px;height:6.80px;background:rgb(237,237,243)"></div><div class="a" style="left:60.70px;top:6.50px;width:10.42px;height:6.80px;background:rgb(235,235,241)"></div><div class="a" style="left:70.82px;top:6.50px;width:10.42px;height:6.80px;background:rgb(239,239,245)"></div><div class="a" style="left:80.93px;top:6.50px;width:10.42px;height:6.80px;background:rgb(241,241,247)"></div><div class="a" style="left:91.05px;top:6.50px;width:10.42px;height:6.80px;background:rgb(241,241,247)"></div><div class="a" style="left:101.17px;top:6.50px;width:10.42px;height:6.80px;background:rgb(232,232,238)"></div><div class="a" style="left:111.28px;top:6.50px;width:10.42px;height:6.80px;background:rgb(239,239,245)"></div></div>
<div class="a" style="left:427.9px;top:535.4px;font-size:11px;line-height:14px;color:#3c4353;letter-spacing:-0.2px;-webkit-text-stroke:0.25px #3c4353;">系统推广</div>
<div class="a" style="left:610.9px;top:534.7px;font-size:12px;line-height:14px;color:#3c4353;letter-spacing:-0.25px;">2023-02-06</div>
<div class="a" style="left:701.4px;top:534.7px;font-size:12px;line-height:14px;color:#3c4353;letter-spacing:-0.25px;">2023-08-10</div>
<svg class="a" style="left:288.5px;top:567.7px" width="16" height="13" viewBox="0 0 16 13"><path d="M0 1.2 Q0 0 1.2 0 H6 L7.6 1.8 H14.8 Q16 1.8 16 3 V11.8 Q16 13 14.8 13 H1.2 Q0 13 0 11.8 Z" fill="#ffda5c"/></svg>
<div class="a" style="left:309px;top:568.5px;width:73px;height:13px;overflow:hidden;border-radius:1px 3px 1px 1px"><div class="a" style="left:0.00px;top:0.00px;width:10.73px;height:6.80px;background:rgb(223,223,229)"></div><div class="a" style="left:10.43px;top:0.00px;width:10.73px;height:6.80px;background:rgb(214,214,220)"></div><div class="a" style="left:20.86px;top:0.00px;width:10.73px;height:6.80px;background:rgb(215,215,221)"></div><div class="a" style="left:31.29px;top:0.00px;width:10.73px;height:6.80px;background:rgb(224,224,230)"></div><div class="a" style="left:41.71px;top:0.00px;width:10.73px;height:6.80px;background:rgb(218,218,224)"></div><div class="a" style="left:52.14px;top:0.00px;width:10.73px;height:6.80px;background:rgb(227,227,233)"></div><div class="a" style="left:62.57px;top:0.00px;width:10.73px;height:6.80px;background:rgb(217,217,223)"></div><div class="a" style="left:0.00px;top:6.50px;width:10.73px;height:6.80px;background:rgb(238,238,244)"></div><div class="a" style="left:10.43px;top:6.50px;width:10.73px;height:6.80px;background:rgb(242,242,248)"></div><div class="a" style="left:20.86px;top:6.50px;width:10.73px;height:6.80px;background:rgb(237,237,243)"></div><div class="a" style="left:31.29px;top:6.50px;width:10.73px;height:6.80px;background:rgb(233,233,239)"></div><div class="a" style="left:41.71px;top:6.50px;width:10.73px;height:6.80px;background:rgb(238,238,244)"></div><div class="a" style="left:52.14px;top:6.50px;width:10.73px;height:6.80px;background:rgb(239,239,245)"></div><div class="a" style="left:62.57px;top:6.50px;width:10.73px;height:6.80px;background:rgb(238,238,244)"></div></div>
<div class="a" style="left:379.5px;top:567.9px;font-size:11px;line-height:14px;color:#3c4353;letter-spacing:-0.2px;-webkit-text-stroke:0.25px #3c4353;">系统</div>
<div class="a" style="left:610.9px;top:567.2px;font-size:12px;line-height:14px;color:#3c4353;letter-spacing:-0.25px;">2023-02-06</div>
<div class="a" style="left:701.4px;top:567.2px;font-size:12px;line-height:14px;color:#3c4353;letter-spacing:-0.25px;">2023-08-10</div>
<div class="card" style="left:810px;top:389px;width:424.5px;height:220px"></div>
<div class="a" style="left:830.5px;top:401.8px;font-size:12px;line-height:15px;color:#313c52;font-weight:bold;letter-spacing:0.4px;">我的文档</div>
<div class="a" style="left:1193.7px;top:403.3px;font-size:10.4px;line-height:11px;color:#aab0ba;letter-spacing:-0.3px;">MORE</div>
<div class="a" style="left:830.5px;top:438.1px;font-size:11px;line-height:14px;color:#313c52;font-weight:bold;letter-spacing:1.0px;">文档标题</div>
<div class="a" style="left:1054.3px;top:438.1px;font-size:11px;line-height:14px;color:#313c52;font-weight:bold;letter-spacing:1.0px;">由谁添加</div>
<div class="a" style="left:1126.6px;top:438.1px;font-size:11px;line-height:14px;color:#313c52;font-weight:bold;letter-spacing:1.0px;">更新时间</div>
<div class="a" style="left:833.3px;top:471.0px;width:70.7px;height:21px;overflow:hidden;border-radius:1px 3px 1px 1px"><div class="a" style="left:0.00px;top:0.00px;width:10.40px;height:10.80px;background:rgb(202,202,208)"></div><div class="a" style="left:10.10px;top:0.00px;width:10.40px;height:10.80px;background:rgb(205,205,211)"></div><div class="a" style="left:20.20px;top:0.00px;width:10.40px;height:10.80px;background:rgb(205,205,211)"></div><div class="a" style="left:30.30px;top:0.00px;width:10.40px;height:10.80px;background:rgb(204,204,210)"></div><div class="a" style="left:40.40px;top:0.00px;width:10.40px;height:10.80px;background:rgb(200,200,206)"></div><div class="a" style="left:50.50px;top:0.00px;width:10.40px;height:10.80px;background:rgb(204,204,210)"></div><div class="a" style="left:60.60px;top:0.00px;width:10.40px;height:10.80px;background:rgb(214,214,220)"></div><div class="a" style="left:0.00px;top:10.50px;width:10.40px;height:10.80px;background:rgb(246,246,252)"></div><div class="a" style="left:10.10px;top:10.50px;width:10.40px;height:10.80px;background:rgb(238,238,244)"></div><div class="a" style="left:20.20px;top:10.50px;width:10.40px;height:10.80px;background:rgb(245,245,251)"></div><div class="a" style="left:30.30px;top:10.50px;width:10.40px;height:10.80px;background:rgb(245,245,251)"></div><div class="a" style="left:40.40px;top:10.50px;width:10.40px;height:10.80px;background:rgb(243,243,249)"></div><div class="a" style="left:50.50px;top:10.50px;width:10.40px;height:10.80px;background:rgb(246,246,252)"></div><div class="a" style="left:60.60px;top:10.50px;width:10.40px;height:10.80px;background:rgb(241,241,247)"></div></div>
<div class="a" style="left:1053.4px;top:471.0px;width:30.8px;height:21px;overflow:hidden;border-radius:1px 3px 1px 1px"><div class="a" style="left:0.00px;top:0.00px;width:10.57px;height:10.80px;background:rgb(204,204,210)"></div><div class="a" style="left:10.27px;top:0.00px;width:10.57px;height:10.80px;background:rgb(204,204,210)"></div><div class="a" style="left:20.53px;top:0.00px;width:10.57px;height:10.80px;background:rgb(200,200,206)"></div><div class="a" style="left:0.00px;top:10.50px;width:10.57px;height:10.80px;background:rgb(236,236,242)"></div><div class="a" style="left:10.27px;top:10.50px;width:10.57px;height:10.80px;background:rgb(246,246,252)"></div><div class="a" style="left:20.53px;top:10.50px;width:10.57px;height:10.80px;background:rgb(237,237,243)"></div></div>
<div class="a" style="left:1126.6px;top:470.4px;font-size:12px;line-height:14px;color:#3c4353;letter-spacing:-0.25px;">2023-04-18</div>
<div class="a" style="left:833.3px;top:501.7px;width:150.4px;height:21px;overflow:hidden;border-radius:1px 3px 1px 1px"><div class="a" style="left:0.00px;top:0.00px;width:10.33px;height:10.80px;background:rgb(204,204,210)"></div><div class="a" style="left:10.03px;top:0.00px;width:10.33px;height:10.80px;background:rgb(213,213,219)"></div><div class="a" style="left:20.05px;top:0.00px;width:10.33px;height:10.80px;background:rgb(206,206,212)"></div><div class="a" style="left:30.08px;top:0.00px;width:10.33px;height:10.80px;background:rgb(206,206,212)"></div><div class="a" style="left:40.11px;top:0.00px;width:10.33px;height:10.80px;background:rgb(200,200,206)"></div><div class="a" style="left:50.13px;top:0.00px;width:10.33px;height:10.80px;background:rgb(208,208,214)"></div><div class="a" style="left:60.16px;top:0.00px;width:10.33px;height:10.80px;background:rgb(206,206,212)"></div><div class="a" style="left:70.19px;top:0.00px;width:10.33px;height:10.80px;background:rgb(209,209,215)"></div><div class="a" style="left:80.21px;top:0.00px;width:10.33px;height:10.80px;background:rgb(207,207,213)"></div><div class="a" style="left:90.24px;top:0.00px;width:10.33px;height:10.80px;background:rgb(210,210,216)"></div><div class="a" style="left:100.27px;top:0.00px;width:10.33px;height:10.80px;background:rgb(208,208,214)"></div><div class="a" style="left:110.29px;top:0.00px;width:10.33px;height:10.80px;background:rgb(213,213,219)"></div><div class="a" style="left:120.32px;top:0.00px;width:10.33px;height:10.80px;background:rgb(204,204,210)"></div><div class="a" style="left:130.35px;top:0.00px;width:10.33px;height:10.80px;background:rgb(201,201,207)"></div><div class="a" style="left:140.37px;top:0.00px;width:10.33px;height:10.80px;background:rgb(211,211,217)"></div><div class="a" style="left:0.00px;top:10.50px;width:10.33px;height:10.80px;background:rgb(243,243,249)"></div><div class="a" style="left:10.03px;top:10.50px;width:10.33px;height:10.80px;background:rgb(246,246,252)"></div><div class="a" style="left:20.05px;top:10.50px;width:10.33px;height:10.80px;background:rgb(245,245,251)"></div><div class="a" style="left:30.08px;top:10.50px;width:10.33px;height:10.80px;background:rgb(244,244,250)"></div><div class="a" style="left:40.11px;top:10.50px;width:10.33px;height:10.80px;background:rgb(242,242,248)"></div><div class="a" style="left:50.13px;top:10.50px;width:10.33px;height:10.80px;background:rgb(244,244,250)"></div><div class="a" style="left:60.16px;top:10.50px;width:10.33px;height:10.80px;background:rgb(238,238,244)"></div><div class="a" style="left:70.19px;top:10.50px;width:10.33px;height:10.80px;background:rgb(244,244,250)"></div><div class="a" style="left:80.21px;top:10.50px;width:10.33px;height:10.80px;background:rgb(238,238,244)"></div><div class="a" style="left:90.24px;top:10.50px;width:10.33px;height:10.80px;background:rgb(244,244,250)"></div><div class="a" style="left:100.27px;top:10.50px;width:10.33px;height:10.80px;background:rgb(244,244,250)"></div><div class="a" style="left:110.29px;top:10.50px;width:10.33px;height:10.80px;background:rgb(236,236,242)"></div><div class="a" style="left:120.32px;top:10.50px;width:10.33px;height:10.80px;background:rgb(243,243,249)"></div><div class="a" style="left:130.35px;top:10.50px;width:10.33px;height:10.80px;background:rgb(238,238,244)"></div><div class="a" style="left:140.37px;top:10.50px;width:10.33px;height:10.80px;background:rgb(245,245,251)"></div></div>
<div class="a" style="left:1053.4px;top:501.7px;width:30.8px;height:21px;overflow:hidden;border-radius:1px 3px 1px 1px"><div class="a" style="left:0.00px;top:0.00px;width:10.57px;height:10.80px;background:rgb(200,200,206)"></div><div class="a" style="left:10.27px;top:0.00px;width:10.57px;height:10.80px;background:rgb(204,204,210)"></div><div class="a" style="left:20.53px;top:0.00px;width:10.57px;height:10.80px;background:rgb(205,205,211)"></div><div class="a" style="left:0.00px;top:10.50px;width:10.57px;height:10.80px;background:rgb(238,238,244)"></div><div class="a" style="left:10.27px;top:10.50px;width:10.57px;height:10.80px;background:rgb(243,243,249)"></div><div class="a" style="left:20.53px;top:10.50px;width:10.57px;height:10.80px;background:rgb(245,245,251)"></div></div>
<div class="a" style="left:1126.6px;top:501.09999999999997px;font-size:12px;line-height:14px;color:#3c4353;letter-spacing:-0.25px;">2023-04-18</div>
<div class="a" style="left:833.3px;top:532.4px;width:190.1px;height:21px;overflow:hidden;border-radius:1px 3px 1px 1px"><div class="a" style="left:0.00px;top:0.00px;width:10.31px;height:10.80px;background:rgb(203,203,209)"></div><div class="a" style="left:10.01px;top:0.00px;width:10.31px;height:10.80px;background:rgb(201,201,207)"></div><div class="a" style="left:20.01px;top:0.00px;width:10.31px;height:10.80px;background:rgb(210,210,216)"></div><div class="a" style="left:30.02px;top:0.00px;width:10.31px;height:10.80px;background:rgb(215,215,221)"></div><div class="a" style="left:40.02px;top:0.00px;width:10.31px;height:10.80px;background:rgb(203,203,209)"></div><div class="a" style="left:50.03px;top:0.00px;width:10.31px;height:10.80px;background:rgb(201,201,207)"></div><div class="a" style="left:60.03px;top:0.00px;width:10.31px;height:10.80px;background:rgb(207,207,213)"></div><div class="a" style="left:70.04px;top:0.00px;width:10.31px;height:10.80px;background:rgb(206,206,212)"></div><div class="a" style="left:80.04px;top:0.00px;width:10.31px;height:10.80px;background:rgb(208,208,214)"></div><div class="a" style="left:90.05px;top:0.00px;width:10.31px;height:10.80px;background:rgb(201,201,207)"></div><div class="a" style="left:100.05px;top:0.00px;width:10.31px;height:10.80px;background:rgb(203,203,209)"></div><div class="a" style="left:110.06px;top:0.00px;width:10.31px;height:10.80px;background:rgb(214,214,220)"></div><div class="a" style="left:120.06px;top:0.00px;width:10.31px;height:10.80px;background:rgb(200,200,206)"></div><div class="a" style="left:130.07px;top:0.00px;width:10.31px;height:10.80px;background:rgb(202,202,208)"></div><div class="a" style="left:140.07px;top:0.00px;width:10.31px;height:10.80px;background:rgb(214,214,220)"></div><div class="a" style="left:150.08px;top:0.00px;width:10.31px;height:10.80px;background:rgb(210,210,216)"></div><div class="a" style="left:160.08px;top:0.00px;width:10.31px;height:10.80px;background:rgb(206,206,212)"></div><div class="a" style="left:170.09px;top:0.00px;width:10.31px;height:10.80px;background:rgb(208,208,214)"></div><div class="a" style="left:180.09px;top:0.00px;width:10.31px;height:10.80px;background:rgb(214,214,220)"></div><div class="a" style="left:0.00px;top:10.50px;width:10.31px;height:10.80px;background:rgb(244,244,250)"></div><div class="a" style="left:10.01px;top:10.50px;width:10.31px;height:10.80px;background:rgb(244,244,250)"></div><div class="a" style="left:20.01px;top:10.50px;width:10.31px;height:10.80px;background:rgb(243,243,249)"></div><div class="a" style="left:30.02px;top:10.50px;width:10.31px;height:10.80px;background:rgb(244,244,250)"></div><div class="a" style="left:40.02px;top:10.50px;width:10.31px;height:10.80px;background:rgb(239,239,245)"></div><div class="a" style="left:50.03px;top:10.50px;width:10.31px;height:10.80px;background:rgb(244,244,250)"></div><div class="a" style="left:60.03px;top:10.50px;width:10.31px;height:10.80px;background:rgb(240,240,246)"></div><div class="a" style="left:70.04px;top:10.50px;width:10.31px;height:10.80px;background:rgb(244,244,250)"></div><div class="a" style="left:80.04px;top:10.50px;width:10.31px;height:10.80px;background:rgb(239,239,245)"></div><div class="a" style="left:90.05px;top:10.50px;width:10.31px;height:10.80px;background:rgb(243,243,249)"></div><div class="a" style="left:100.05px;top:10.50px;width:10.31px;height:10.80px;background:rgb(238,238,244)"></div><div class="a" style="left:110.06px;top:10.50px;width:10.31px;height:10.80px;background:rgb(242,242,248)"></div><div class="a" style="left:120.06px;top:10.50px;width:10.31px;height:10.80px;background:rgb(237,237,243)"></div><div class="a" style="left:130.07px;top:10.50px;width:10.31px;height:10.80px;background:rgb(242,242,248)"></div><div class="a" style="left:140.07px;top:10.50px;width:10.31px;height:10.80px;background:rgb(243,243,249)"></div><div class="a" style="left:150.08px;top:10.50px;width:10.31px;height:10.80px;background:rgb(241,241,247)"></div><div class="a" style="left:160.08px;top:10.50px;width:10.31px;height:10.80px;background:rgb(237,237,243)"></div><div class="a" style="left:170.09px;top:10.50px;width:10.31px;height:10.80px;background:rgb(246,246,252)"></div><div class="a" style="left:180.09px;top:10.50px;width:10.31px;height:10.80px;background:rgb(239,239,245)"></div></div>
<div class="a" style="left:1053.4px;top:532.4px;width:30.8px;height:21px;overflow:hidden;border-radius:1px 3px 1px 1px"><div class="a" style="left:0.00px;top:0.00px;width:10.57px;height:10.80px;background:rgb(213,213,219)"></div><div class="a" style="left:10.27px;top:0.00px;width:10.57px;height:10.80px;background:rgb(202,202,208)"></div><div class="a" style="left:20.53px;top:0.00px;width:10.57px;height:10.80px;background:rgb(206,206,212)"></div><div class="a" style="left:0.00px;top:10.50px;width:10.57px;height:10.80px;background:rgb(246,246,252)"></div><div class="a" style="left:10.27px;top:10.50px;width:10.57px;height:10.80px;background:rgb(240,240,246)"></div><div class="a" style="left:20.53px;top:10.50px;width:10.57px;height:10.80px;background:rgb(237,237,243)"></div></div>
<div class="a" style="left:1126.6px;top:531.8000000000001px;font-size:12px;line-height:14px;color:#3c4353;letter-spacing:-0.25px;">2023-04-18</div>
<div class="a" style="left:833.3px;top:563.3px;width:181.7px;height:21px;overflow:hidden;border-radius:1px 3px 1px 1px"><div class="a" style="left:0.00px;top:0.00px;width:10.39px;height:10.80px;background:rgb(236,236,242)"></div><div class="a" style="left:10.09px;top:0.00px;width:10.39px;height:10.80px;background:rgb(234,234,240)"></div><div class="a" style="left:20.19px;top:0.00px;width:10.39px;height:10.80px;background:rgb(224,224,230)"></div><div class="a" style="left:30.28px;top:0.00px;width:10.39px;height:10.80px;background:rgb(233,233,239)"></div><div class="a" style="left:40.38px;top:0.00px;width:10.39px;height:10.80px;background:rgb(232,232,238)"></div><div class="a" style="left:50.47px;top:0.00px;width:10.39px;height:10.80px;background:rgb(232,232,238)"></div><div class="a" style="left:60.57px;top:0.00px;width:10.39px;height:10.80px;background:rgb(227,227,233)"></div><div class="a" style="left:70.66px;top:0.00px;width:10.39px;height:10.80px;background:rgb(224,224,230)"></div><div class="a" style="left:80.76px;top:0.00px;width:10.39px;height:10.80px;background:rgb(226,226,232)"></div><div class="a" style="left:90.85px;top:0.00px;width:10.39px;height:10.80px;background:rgb(236,236,242)"></div><div class="a" style="left:100.94px;top:0.00px;width:10.39px;height:10.80px;background:rgb(224,224,230)"></div><div class="a" style="left:111.04px;top:0.00px;width:10.39px;height:10.80px;background:rgb(229,229,235)"></div><div class="a" style="left:121.13px;top:0.00px;width:10.39px;height:10.80px;background:rgb(225,225,231)"></div><div class="a" style="left:131.23px;top:0.00px;width:10.39px;height:10.80px;background:rgb(233,233,239)"></div><div class="a" style="left:141.32px;top:0.00px;width:10.39px;height:10.80px;background:rgb(223,223,229)"></div><div class="a" style="left:151.42px;top:0.00px;width:10.39px;height:10.80px;background:rgb(228,228,234)"></div><div class="a" style="left:161.51px;top:0.00px;width:10.39px;height:10.80px;background:rgb(236,236,242)"></div><div class="a" style="left:171.61px;top:0.00px;width:10.39px;height:10.80px;background:rgb(229,229,235)"></div><div class="a" style="left:0.00px;top:10.50px;width:10.39px;height:10.80px;background:rgb(240,240,246)"></div><div class="a" style="left:10.09px;top:10.50px;width:10.39px;height:10.80px;background:rgb(241,241,247)"></div><div class="a" style="left:20.19px;top:10.50px;width:10.39px;height:10.80px;background:rgb(240,240,246)"></div><div class="a" style="left:30.28px;top:10.50px;width:10.39px;height:10.80px;background:rgb(244,244,250)"></div><div class="a" style="left:40.38px;top:10.50px;width:10.39px;height:10.80px;background:rgb(246,246,252)"></div><div class="a" style="left:50.47px;top:10.50px;width:10.39px;height:10.80px;background:rgb(244,244,250)"></div><div class="a" style="left:60.57px;top:10.50px;width:10.39px;height:10.80px;background:rgb(243,243,249)"></div><div class="a" style="left:70.66px;top:10.50px;width:10.39px;height:10.80px;background:rgb(244,244,250)"></div><div class="a" style="left:80.76px;top:10.50px;width:10.39px;height:10.80px;background:rgb(241,241,247)"></div><div class="a" style="left:90.85px;top:10.50px;width:10.39px;height:10.80px;background:rgb(243,243,249)"></div><div class="a" style="left:100.94px;top:10.50px;width:10.39px;height:10.80px;background:rgb(243,243,249)"></div><div class="a" style="left:111.04px;top:10.50px;width:10.39px;height:10.80px;background:rgb(239,239,245)"></div><div class="a" style="left:121.13px;top:10.50px;width:10.39px;height:10.80px;background:rgb(243,243,249)"></div><div class="a" style="left:131.23px;top:10.50px;width:10.39px;height:10.80px;background:rgb(238,238,244)"></div><div class="a" style="left:141.32px;top:10.50px;width:10.39px;height:10.80px;background:rgb(243,243,249)"></div><div class="a" style="left:151.42px;top:10.50px;width:10.39px;height:10.80px;background:rgb(246,246,252)"></div><div class="a" style="left:161.51px;top:10.50px;width:10.39px;height:10.80px;background:rgb(245,245,251)"></div><div class="a" style="left:171.61px;top:10.50px;width:10.39px;height:10.80px;background:rgb(245,245,251)"></div></div>
<div class="a" style="left:1054.5px;top:563.4px;font-size:11px;line-height:14px;color:#3c4353;letter-spacing:0.5px;-webkit-text-stroke:0.25px #3c4353;">何娟</div>
<div class="a" style="left:1126.6px;top:562.7px;font-size:12px;line-height:14px;color:#3c4353;letter-spacing:-0.25px;">2023-04-18</div>
<div id="ftr"></div>
<div class="a" style="left:37.2px;top:578.9px;font-size:11px;line-height:14px;color:#6a7182;letter-spacing:0.9px;-webkit-text-stroke:0.25px #6a7182;">禅道</div>
<div class="a" style="left:65px;top:578.9px;font-size:11px;line-height:14px;color:#b4b8c0;">&gt;</div>
<div class="a" style="left:76.8px;top:578.9px;font-size:11px;line-height:14px;color:#6a7182;letter-spacing:0.9px;-webkit-text-stroke:0.25px #6a7182;">文档</div>
<div class="a" style="left:104.7px;top:578.9px;font-size:11px;line-height:14px;color:#b4b8c0;">&gt;</div>
<div class="a" style="left:115.9px;top:578.9px;font-size:11px;line-height:14px;color:#6a7182;letter-spacing:0.8px;-webkit-text-stroke:0.25px #6a7182;">文档主页</div>
<div class="a" style="left:1002px;top:580.5px;font-size:10.7px;line-height:14px;color:#959ba7;-webkit-text-stroke:0.25px #959ba7;">Designed by <span style="font-size:11px;position:relative;top:0.5px">艾体验</span></div>
<div class="a" style="left:994.5px;top:582px;width:32.5px;height:9.5px;background:rgba(236,237,240,.93);border-radius:1px"></div>
<svg class="a" style="left:1106.3px;top:580px" width="16.4" height="16.4" viewBox="0 0 16.4 16.4"><circle cx="8.2" cy="8.2" r="8.2" fill="#0d8ef4"/><path d="M4 6.2 Q5 3.2 7.6 4.2 Q10.2 5.6 13.8 6.4 Q11.6 8.4 8.6 7.4 Q6.4 6.8 5.6 7.6 Z" fill="#fff"/><g fill="none" stroke="#fff" stroke-linecap="round" stroke-width="1.5"><path d="M10.9 9.4 Q11.6 12.6 8.6 12.9 Q6.2 13 6.4 10.6 Q6.8 9.2 8.6 9.6"/><path d="M4.2 7.6 Q3.6 11.2 5.8 13"/></g></svg>
<div class="a" style="left:1126.5px;top:581.8px;font-size:11px;line-height:14px;color:#4a5262;letter-spacing:0.55px;-webkit-text-stroke:0.25px #4a5262;">禅道企业版 <span style="font-size:11.5px;letter-spacing:0">3.7.2</span></div>
<div class="a" style="left:1224.4px;top:577px;width:37.6px;height:23.5px;background:#ff5a5a;border-radius:3px"></div>
<div class="a" style="left:1232.8px;top:582.5px;font-size:11px;line-height:14px;color:#fff;letter-spacing:-0.5px;-webkit-text-stroke:0.25px #fff;">签退</div>
<div id="strip"></div>
</body></html>
